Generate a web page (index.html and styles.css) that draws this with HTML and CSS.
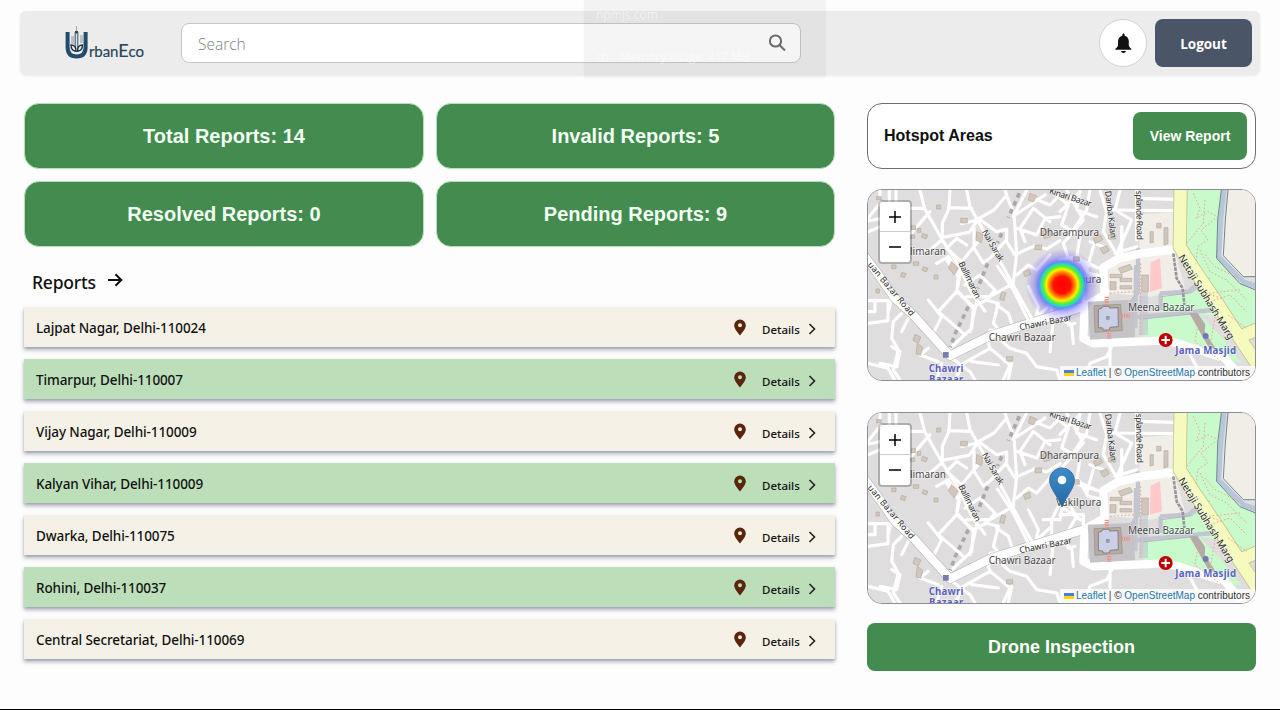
FILE: index.html
```html
<!DOCTYPE html>
<html lang="en">
<head>
<meta charset="utf-8">
<title>UrbanEco</title>
<link rel="stylesheet" href="styles.css">
</head>
<body>
<svg class="defs" aria-hidden="true">
  <defs>
    <radialGradient id="heat">
      <stop offset="0" stop-color="#ff0000"/><stop offset=".24" stop-color="#ff1200"/>
      <stop offset=".35" stop-color="#ff8a00"/><stop offset=".43" stop-color="#fff000"/>
      <stop offset=".51" stop-color="#58f035"/><stop offset=".58" stop-color="#20dcc0"/>
      <stop offset=".64" stop-color="#4b6cff" stop-opacity=".75"/><stop offset=".76" stop-color="#5a4cf5" stop-opacity=".36"/>
      <stop offset="1" stop-color="#5a4cf5" stop-opacity="0"/>
    </radialGradient>
    <linearGradient id="pinfill" x2="0" y2="1"><stop offset="0" stop-color="#3d8bc9"/><stop offset="1" stop-color="#246aa6"/></linearGradient>
    <symbol id="city" viewBox="24 15 1161 570">
      <path fill="#dfdddd" d="M24 15h1161v570H24z"/>
      <!-- open land and gardens -->
      <path fill="#f1eee8" d="M838 88l106-6v102l-106 12zM745 245l90-40 110-5 30 110-100 25-130-10zM1105 15h80v262l-38-2-62-60 10-130z"/>
      <path fill="#c8facc" d="M985 15h108l-12 90-5 110 40 60 69 45v125l-50 10-75-115-82-140zM905 335l90-12 55-45 70 100 70 120-15 20-60-120-140-15-75 5zM850 402l165-17 70 70 60 80-60-15-80-45-155-15z"/>
      <path fill="#ffc9c9" d="M872 232l28-12 6 90-36 10z"/>
      <path fill="#b7bdca" d="M838 320h26v130h-26z" opacity=".5"/>
      <!-- water and fort wall -->
      <path class="wall" d="M1092 15l-10 90-6 110 75 76 38 12"/>
      <path class="wall-line" d="M1104 15l-8 90-6 107 60 63h36M1084 15l-11 90-3 115 70 76 50 20"/>
      <path class="lane" d="M834 190v130l-20 35M900 325l85-5 55-45M902 325v50M820 397l240-22M828 240l-2 190"/>
      <path class="edge" d="M905 335l90-12 55-45M850 402l165-17"/>
      <!-- minor streets -->
      <g class="street">
        <path d="M180 15l15 58 52 92 45 70 45 93 38 50M24 108l40-8 50-30 80 0M24 140l50-20M88 15v40l22 5M108 15v55M60 15v40l-36 45M245 165l-35 30-35 5M210 80l-70 80"/>
        <path d="M320 15l10 50 45 80-70 85-45-40 30-30 30 20M270 15l-3 55-20 45 0 42 80-15 30-42 45-25 38-45M265 68l70 2M440 30l-5-15M355 100l55 40 30-8 0 32-50 55-20 15-28-45 0-60M305 115l50-10M440 32l22 55 8 120-10 85M465 90l90-60M500 15l-40 80M520 40l50 20 30-30M470 130l60 20 25-50 45-5M495 170l-15-40 40-60 50 40M470 207l55-25 35 10 40-25M470 270l35-30 25 15 40-45M460 295l-70 40-70 0M440 170l25 40"/>
        <path d="M230 235l35-20 35 55-10 50 50 45 40-20 25-30-45-45-45 30M260 225l35 50-5 45-55 60 75 65M205 345l40 50-30 60M295 320l45 50-5 60-70 65M375 345l40 10-15 60 25 30M410 360l35 25 15 45M350 350l-20 90M390 435l55 0M125 385l-25 25-5 50 20 35-15 60 20 30M24 415l60-8 0-60-60 0M45 345l0 35-21 0M24 535l60 15 20 35M85 380l15-60M145 400l-20 40M95 485l25 15-10 45-50-10"/>
        <path d="M270 515l60 45 15 25M380 455l10 35-80 45-25 50M390 490l60 50-20 45M410 455l40 35 50 15 30 40 60 10 10 30M455 535l-10 50M580 400l-10 100M525 410l10-45-30-60M575 395l0-60 25-50M550 335l50 0 10-50M205 490l-25 20 55 20M335 530l80 10M245 535l-15 50M520 405l55-50"/>
        <path d="M590 30l35 30-20 60 55 30M600 80l60-60M620 15l50 90-60 70 15 45 110 35M660 15l-10 60 60 20M690 15l-10 60-40 60M720 15l20 65-10 60 50 85M780 15l-15 60 50 30-40 90M830 15l0 150M750 75l195 2M600 225l55-10 30 50 45 10M610 265l40 60-35 60M660 150l-10 70 70 30M600 320l70 0 0 65M690 170l40 15M840 40l105 3M785 215l0-90M625 420l20-5M600 400l35 20 5 55M610 300l60 40M765 205l65-20M750 480l0 60M755 485l-15 30-50 20-15 50M985 500l25 45M700 185l-20 70"/>
      </g>
      <path class="casing" d="M0 195l45 60 60 85 55 50 110 122 125-62 90-28 120-37 65-20"/>
      <path class="avenue" d="M0 195l45 60 60 85 55 50 110 122 125-62 90-28 120-37 65-20"/>
      <path class="nai" d="M418 225l47 85 55 98M410 240l50 75 48 97"/>
      <path class="avenue" d="M955 192l-110 13-70 16-45 27 4 82-60 34-4 96 30 15 205-8 45 7 145 46 50 60"/>
      <path class="casing2" d="M962 0l-3 185 41 65 70 102 70 108 90 135M1140 455l60-25"/>
      <path class="highway" d="M962 0l-3 185 41 65 70 102 70 108 90 135M1140 455l60-25"/>
      <!-- mosque -->
      <path fill="#c6c3c6" d="M683 350l138-6 4 112-135 8z"/>
      <path fill="#b5aba0" stroke="#968d84" stroke-width="2" d="M702 362l80-4 5 78-82 6z"/>
      <path fill="#cbd0e6" stroke="#867e87" stroke-width="3" d="M715 373l10-3 4-6 18 0 2 5 25-1 1 57-25 2-2 8-18 0-2-6-13-1z"/>
      <path fill="#9398b7" d="M738 393h11v11h-11z"/>
      <path fill="#b4aba6" d="M988 385l24-2 24 35-2 22 36 55-25-10z"/>
      <path class="rail" d="M478 25L445 98M425 145l-12 28M383 235l-30 75M325 365l-40 82-14 40"/>
      <path class="rail2" d="M940 205l10 75 18 30 5 50"/>
      <!-- buildings -->
      <g class="blocks">
        <path d="M155 122h12v12h-12zM188 145l15 5-5 12-14-5zM150 150h14v10h-14zM172 130h10v12h-10zM160 230h16v11h-16zM190 245l14 5-5 11-13-5zM222 270h12v12h-12zM125 262l13 4-4 12-13-4zM95 240h13v11h-13zM230 60h12v12h-12zM302 100h20v14h-20zM350 140l20 8-6 25-16-7zM425 320l12 3-5 24-13-4zM165 448l18 8-8 18-16-8zM172 475l16 12-6 24-14-5zM440 515h18v13h-18zM275 230l20 20-12 20-18-22zM490 260l18-7 5 15-18 7zM510 25l20 8-10 18-15-6zM545 140l25-10 5 25-22 6zM525 180h20v14h-20zM48 312h10v12h-10zM50 35h14v10h-14z"/>
        <path d="M750 268h36v10h-36zM775 250l35-12 8 14-35 13zM750 290h18v24h-18zM780 280h35v10h-35zM780 302h35v10h-35zM870 140l10 0 0 32-10 2zM912 128l12 0 0 48-12 4zM890 115h13v14h-13zM845 270l20 0 0 50-20 0zM720 190l20-8 8 15-18 10zM700 160l22-10 6 14-22 12zM640 215l18 0 0 14-18 0zM745 150h22v12h-22z"/>
      </g>
      <path class="footway" d="M1000 25l20 45-12 30 35-20 30 15-50 40 20 30-30 20-5 50M1035 45l-5 70-50 60M1020 195l30 65 50 25 60 60M1035 210l30 35 80 40M1050 350l60-20 50 50M1105 390l55 40M1015 410l-10 60 80 60M1065 395l-15 90M750 325l75-5M842 235v215M1085 340l-45-15 100-10"/>
      <path class="steps" d="M740 335v24M747 437v24M785 392h24"/>
      <path fill="#777cb3" d="M249 501h17v17h-17z"/>
      <circle cx="1037" cy="453" r="9" fill="#7278b8"/>
      <circle cx="917" cy="465" r="21" fill="#bf0000"/><path stroke="#fff" stroke-width="6" d="M904 465h26M917 452v26"/>
    </symbol>
  </defs>
</svg>

<header class="topbar">
  <div class="brand">
    <svg width="25" height="37" viewBox="0 0 25 37">
      <path d="M11.500 1v7" stroke="#9aa7b0" stroke-width="1"/>
      <path fill="#6f8290" d="M9.500 7h4v20h-4z"/><path fill="#d7dee2" d="M11 9h1v17h-1z"/>
      <path fill="#33495d" d="M10 6h3v2h-3z"/>
      <path stroke="#8596a2" stroke-width="1.200" d="M6 12h3M6 14h3M6 16h3M6 18h3M15 11h3M15 13h3M15 15h3M15 17h3"/>
      <path fill="none" stroke="#1f4d6b" stroke-width="4" d="M2.600 7v15c0 7 4 9.500 9 9.500s9-2.500 9-9.500V7"/>
      <path fill="#e4eaed" stroke="#20303e" stroke-width="1.300" d="M11 26c-4 0-5-3-5-6 3 0 5 2 5 6zM12.500 26c4 0 5-3 5-6-3 0-5 2-5 6z"/>
    </svg>
    <span class="brand-name">rban<b>E</b>co</span>
  </div>
  <div class="search">
    <span>Search</span>
    <svg width="18" height="18" viewBox="0 0 18 18" fill="none" stroke="#6b6b6b" stroke-width="2"><circle cx="7.500" cy="7" r="5.600"/><path d="M11.700 11.200L17 16.500"/></svg>
  </div>
  <div class="actions">
    <div class="bell"><svg width="18" height="21" viewBox="0 0 18 21" fill="#111"><path d="M9.500 .5c.7 0 1.200.6 1.200 1.500v.7c2.600.7 4.100 2.900 4.100 5.600v4.500c.4 1.700 2.500 2.500 2.500 3.200v.8H1.400V16c0-.7 2.200-1.500 2.600-3.200V8.300c0-2.700 1.700-4.900 4.300-5.600V2C8.300 1.100 8.800.5 9.500 .5zM7 18h5c-.3 1.300-1.200 2-2.500 2s-2.200-.7-2.500-2z"/></svg></div>
    <div class="logout">Logout</div>
  </div>
</header>

<div class="ghost">
  <span>npmjs.com</span>
  <span class="ghost-row"><svg width="13" height="10" viewBox="0 0 13 10" fill="none" stroke="currentColor" stroke-width="1.300"><path d="M2 9a5 5 0 1 1 9 0zM6 6l3-3"/></svg>Memory usage: 417 MB</span>
</div>

<main class="page">
  <section class="left">
    <div class="stats">
      <div class="stat">Total Reports: 14</div><div class="stat">Invalid Reports: 5</div>
      <div class="stat">Resolved Reports: 0</div><div class="stat">Pending Reports: 9</div>
    </div>
    <h2 class="title">Reports <svg width="16" height="14" viewBox="0 0 16 14" fill="none" stroke="#111" stroke-width="2"><path d="M1 7h13M8.500 1.200L14.300 7l-5.800 5.800"/></svg></h2>
    <div class="list">
      <div class="row"><span>Lajpat Nagar, Delhi-110024</span><svg class="pin" viewBox="0 0 12 17"><path d="M6 .5a5.800 5.800 0 0 1 5.800 5.800C11.800 10 8 14 6 16.500 4 14 .2 10 .2 6.300A5.800 5.800 0 0 1 6 .5zm0 3.700a2 2 0 1 0 0 4 2 2 0 0 0 0-4z"/></svg><span class="details">Details</span><svg class="chev" viewBox="0 0 8 12"><path d="M1.500 1l5 5-5 5"/></svg></div>
      <div class="row"><span>Timarpur, Delhi-110007</span><svg class="pin" viewBox="0 0 12 17"><path d="M6 .5a5.800 5.800 0 0 1 5.800 5.800C11.800 10 8 14 6 16.500 4 14 .2 10 .2 6.300A5.800 5.800 0 0 1 6 .5zm0 3.700a2 2 0 1 0 0 4 2 2 0 0 0 0-4z"/></svg><span class="details">Details</span><svg class="chev" viewBox="0 0 8 12"><path d="M1.500 1l5 5-5 5"/></svg></div>
      <div class="row"><span>Vijay Nagar, Delhi-110009</span><svg class="pin" viewBox="0 0 12 17"><path d="M6 .5a5.800 5.800 0 0 1 5.800 5.800C11.800 10 8 14 6 16.500 4 14 .2 10 .2 6.300A5.800 5.800 0 0 1 6 .5zm0 3.700a2 2 0 1 0 0 4 2 2 0 0 0 0-4z"/></svg><span class="details">Details</span><svg class="chev" viewBox="0 0 8 12"><path d="M1.500 1l5 5-5 5"/></svg></div>
      <div class="row"><span>Kalyan Vihar, Delhi-110009</span><svg class="pin" viewBox="0 0 12 17"><path d="M6 .5a5.800 5.800 0 0 1 5.800 5.800C11.800 10 8 14 6 16.500 4 14 .2 10 .2 6.300A5.800 5.800 0 0 1 6 .5zm0 3.700a2 2 0 1 0 0 4 2 2 0 0 0 0-4z"/></svg><span class="details">Details</span><svg class="chev" viewBox="0 0 8 12"><path d="M1.500 1l5 5-5 5"/></svg></div>
      <div class="row"><span>Dwarka, Delhi-110075</span><svg class="pin" viewBox="0 0 12 17"><path d="M6 .5a5.800 5.800 0 0 1 5.800 5.800C11.800 10 8 14 6 16.500 4 14 .2 10 .2 6.300A5.800 5.800 0 0 1 6 .5zm0 3.700a2 2 0 1 0 0 4 2 2 0 0 0 0-4z"/></svg><span class="details">Details</span><svg class="chev" viewBox="0 0 8 12"><path d="M1.500 1l5 5-5 5"/></svg></div>
      <div class="row"><span>Rohini, Delhi-110037</span><svg class="pin" viewBox="0 0 12 17"><path d="M6 .5a5.800 5.800 0 0 1 5.800 5.800C11.800 10 8 14 6 16.500 4 14 .2 10 .2 6.300A5.800 5.800 0 0 1 6 .5zm0 3.700a2 2 0 1 0 0 4 2 2 0 0 0 0-4z"/></svg><span class="details">Details</span><svg class="chev" viewBox="0 0 8 12"><path d="M1.500 1l5 5-5 5"/></svg></div>
      <div class="row"><span>Central Secretariat, Delhi-110069</span><svg class="pin" viewBox="0 0 12 17"><path d="M6 .5a5.800 5.800 0 0 1 5.800 5.800C11.800 10 8 14 6 16.500 4 14 .2 10 .2 6.300A5.800 5.800 0 0 1 6 .5zm0 3.700a2 2 0 1 0 0 4 2 2 0 0 0 0-4z"/></svg><span class="details">Details</span><svg class="chev" viewBox="0 0 8 12"><path d="M1.500 1l5 5-5 5"/></svg></div>
    </div>
  </section>

  <aside class="right">
    <div class="hotspot"><span>Hotspot Areas</span><div class="view">View Report</div></div>

    <div class="map">
      <svg class="tiles" viewBox="24 15 1161 570">
        <use href="#city" x="24" y="15" width="1161" height="570"/>
        <g class="labels">
          <text x="150" y="210" textLength="108">limaran</text><text x="539" y="152" textLength="178">Dharampura</text>
          <text x="386" y="469" textLength="201">Chawri Bazaar</text><text x="804" y="377" textLength="199">Meena Bazaar</text>
          <text x="588" y="293" textLength="136">Vakilpura</text>
          <g class="station"><text x="206" y="560" textLength="104">Chawri</text><text x="207" y="593" textLength="103">Bazaar</text><text x="946" y="506" textLength="182">Jama Masjid</text></g>
          <g class="road">
            <text transform="translate(22 240) rotate(50)" textLength="202">uan Bazar Road</text>
            <text transform="translate(295 235) rotate(64)" textLength="120">Ballimaran</text>
            <text transform="translate(365 140) rotate(60)" textLength="106">Nai Sarak</text>
            <text transform="translate(480 436) rotate(-11)" textLength="160">Chawri Bazar</text>
            <text transform="translate(566 25) rotate(18)" textLength="132">Kinari Bazar</text>
            <text transform="translate(735 19) rotate(83)" textLength="142">Dariba Kalan</text>
            <text transform="translate(828 17) rotate(89)" textLength="148">splande Road</text>
            <text class="big" transform="translate(954 217) rotate(58.500)" textLength="292">Netaji Subhash Marg</text>
          </g>
        </g>
        <circle cx="606" cy="300" r="110" fill="url(#heat)"/>
      </svg>
      <div class="zoom"><svg width="30" height="60" viewBox="0 0 30 60"><path stroke="#ccc" d="M0 29.500h30"/><path stroke="#000" stroke-width="1.500" d="M9 15h12M15 9v12M9 45h12"/></svg></div>
      <div class="credit"><i class="flag"></i><a>Leaflet</a> | © <a>OpenStreetMap</a> contributors</div>
    </div>

    <div class="map second">
      <svg class="tiles" viewBox="24 15 1161 570">
        <use href="#city" x="24" y="15" width="1161" height="570"/>
        <g class="labels">
          <text x="150" y="210" textLength="108">limaran</text><text x="539" y="152" textLength="178">Dharampura</text>
          <text x="386" y="469" textLength="201">Chawri Bazaar</text><text x="804" y="377" textLength="199">Meena Bazaar</text>
          <text x="588" y="293" textLength="136">Vakilpura</text>
          <g class="station"><text x="206" y="560" textLength="104">Chawri</text><text x="207" y="593" textLength="103">Bazaar</text><text x="946" y="506" textLength="182">Jama Masjid</text></g>
          <g class="road">
            <text transform="translate(22 240) rotate(50)" textLength="202">uan Bazar Road</text>
            <text transform="translate(295 235) rotate(64)" textLength="120">Ballimaran</text>
            <text transform="translate(365 140) rotate(60)" textLength="106">Nai Sarak</text>
            <text transform="translate(480 436) rotate(-11)" textLength="160">Chawri Bazar</text>
            <text transform="translate(566 25) rotate(18)" textLength="132">Kinari Bazar</text>
            <text transform="translate(735 19) rotate(83)" textLength="142">Dariba Kalan</text>
            <text transform="translate(828 17) rotate(89)" textLength="148">splande Road</text>
            <text class="big" transform="translate(954 217) rotate(58.500)" textLength="292">Netaji Subhash Marg</text>
          </g>
        </g>
        <path fill="url(#pinfill)" stroke="#2e6f9f" stroke-width="3" d="M606 180c-21 0-37 17-37 37 0 25 24 46 37 80 13-34 37-55 37-80 0-20-16-37-37-37z"/>
        <circle cx="606" cy="216" r="13" fill="#fff"/>
      </svg>
      <div class="zoom"><svg width="30" height="60" viewBox="0 0 30 60"><path stroke="#ccc" d="M0 29.500h30"/><path stroke="#000" stroke-width="1.500" d="M9 15h12M15 9v12M9 45h12"/></svg></div>
      <div class="credit"><i class="flag"></i><a>Leaflet</a> | © <a>OpenStreetMap</a> contributors</div>
    </div>

    <div class="drone">Drone Inspection</div>
  </aside>
</main>
</body>
</html>
```

FILE: styles.css
```css
* { box-sizing: border-box; }
body { margin: 0; height: 710px; overflow: hidden; background: #fdfdfd; border-bottom: 1px solid #000; padding: 11px 20px 0; font-family: "Noto Sans", "Open Sans", sans-serif; color: #111; position: relative; }
.defs { position: absolute; width: 0; height: 0; }
.topbar { height: 64px; background: #ececec; border-radius: 6px; display: flex; align-items: center; padding: 0 8px 0 45px; box-shadow: 0 1px 3px rgba(0,0,0,.08); }
.brand { width: 116px; height: 37px; display: flex; align-items: flex-start; color: #28465c; }
.brand-name { font: 15px/20px Lato, sans-serif; letter-spacing: -.1px; padding-top: 15px; margin-left: -1px; white-space: nowrap; -webkit-text-stroke: .2px #28465c; }
.brand-name b { font-weight: 400; font-size: 18px; }
.search { width: 620px; height: 40px; background: #fff; border: 1px solid #c6c6c6; border-radius: 8px; display: flex; align-items: center; justify-content: space-between; padding: 2px 14px 0 16px; font: 300 15.500px/24px "Open Sans", sans-serif; color: #7c7f84; }
.search svg { margin-top: -2px; }
.actions { margin-left: auto; display: flex; gap: 8px; align-items: center; }
.bell { width: 48px; height: 48px; border-radius: 50%; background: #fff; border: 1px solid #d3d3d8; display: flex; align-items: center; justify-content: center; }
.logout { width: 97px; height: 48px; border-radius: 8px; background: #4a5568; color: #fff; font: 700 13.500px/50px "Open Sans", sans-serif; text-align: center; }
.ghost { position: absolute; left: 584px; top: 0; width: 242px; height: 77px; background: rgba(120,120,135,.075); color: rgba(255,255,255,.5); font: 12px/16px "Open Sans", sans-serif; padding: 7px 12px; display: flex; flex-direction: column; gap: 26px; box-shadow: 0 1px 2px rgba(0,0,0,.03); }
.ghost-row { display: flex; align-items: center; gap: 11px; white-space: nowrap; letter-spacing: -.1px; }
.page { display: flex; justify-content: space-between; padding: 28px 4px 0; }
.left { width: 811px; }
.stats { display: grid; grid-template-columns: 400px 399px; gap: 12px; }
.stat { height: 66px; border: 1px solid #b7e0ba; border-radius: 15px; background: #438b4e; color: #f2fff3; font: 700 20px/65px "Liberation Sans", Arial, sans-serif; text-align: center; }
.title { margin: 0; height: 60px; padding: 9px 0 0 8px; display: flex; align-items: center; gap: 11px; font: 500 17.500px/24px "Noto Sans", sans-serif; letter-spacing: -.2px; }
.title svg { margin-top: -3px; }
.list { display: flex; flex-direction: column; gap: 12px; }
.row { height: 40px; background: #f6f1e7; padding: 0 19px 0 12px; display: flex; align-items: center; font-size: 13.500px; font-weight: 500; letter-spacing: -.1px; box-shadow: 0 3px 4px rgba(70,75,105,.42), 0 1px 2px rgba(70,75,105,.2); }
.row:nth-child(even) { background: #bcdfba; }
.row > span:first-child { flex: 1; padding-top: 1px; }
.pin { width: 12px; height: 17px; fill: #5a260b; }
.details { width: 38px; margin: 4px 8px 0 16px; font-size: 11.500px; letter-spacing: 0; white-space: nowrap; }
.chev { width: 8px; height: 12px; margin-top: 4px; fill: none; stroke: #222; stroke-width: 1.600; }
.right { width: 389px; }
.hotspot { height: 66px; border: 1px solid #6e6a78; border-radius: 15px; display: flex; align-items: center; justify-content: space-between; padding: 0 8px 0 16px; font: 700 16px/24px "Liberation Sans", Arial, sans-serif; background: #fff; }
.view { width: 114px; height: 48px; border-radius: 8px; background: #438b4e; color: #fff; text-align: center; font: 700 14px/48px "Liberation Sans", Arial, sans-serif; }
.map { position: relative; height: 192px; margin-top: 20px; border: 1px solid #8d8d96; border-radius: 15px; overflow: hidden; }
.map.second { margin-top: 31px; }
.tiles { display: block; width: 387px; height: 190px; }
.zoom { position: absolute; left: 10px; top: 10px; width: 34px; height: 64px; border: 2px solid rgba(0,0,0,.22); border-radius: 4px; background: #fff; background-clip: padding-box; }
.zoom svg { display: block; }
.credit { position: absolute; right: 0; bottom: 0; height: 14px; width: 195px; padding: 0 5px 0 4px; background: rgba(255,255,255,.8); font: 10px/14px "Liberation Sans", Arial, sans-serif; color: #333; white-space: nowrap; }
.credit a { color: #1b78a8; }
.flag { display: inline-block; width: 10px; height: 6px; margin-right: 2px; vertical-align: 0; background: linear-gradient(#4c7be1 50%, #ffd500 50%); }
.drone { margin-top: 19px; height: 48px; border-radius: 8px; background: #438b4e; color: #fff; font: 700 18px/48px "Liberation Sans", Arial, sans-serif; text-align: center; }
.street, .avenue, .nai, .casing, .casing2, .highway, .wall, .wall-line, .lane, .edge, .rail, .rail2, .footway, .steps { fill: none; stroke-linejoin: round; }
.street { stroke: #fff; stroke-width: 9.500; stroke-linecap: round; }
.avenue { stroke: #fff; stroke-width: 25; }
.casing { stroke: #bcbaba; stroke-width: 29; }
.nai { stroke: #fff; stroke-width: 9; }
.casing2 { stroke: #c4c58a; stroke-width: 42; }
.highway { stroke: #f7fabf; stroke-width: 37; }
.wall { stroke: #b5c8da; stroke-width: 15; }
.wall-line { stroke: #77818f; stroke-width: 3; }
.lane { stroke: #c3c6d1; stroke-width: 13; }
.edge { stroke: #a4aab5; stroke-width: 2; }
.rail { stroke: #aaa8ab; stroke-width: 11; stroke-dasharray: 14 12; }
.rail2 { stroke: #96949e; stroke-width: 8; stroke-dasharray: 11 3; }
.blocks { fill: #d1c7bd; stroke: #b6aa9d; stroke-width: 2; }
.footway { stroke: #eda394; stroke-width: 3; stroke-dasharray: 5 6; }
.steps { stroke: #ef8f87; stroke-width: 12; stroke-dasharray: 4 3; }
.labels { font-family: "Noto Sans", sans-serif; font-size: 30px; fill: #4a4a4a; stroke: #fff; stroke-opacity: .55; stroke-width: 4; paint-order: stroke; }
.road { font-size: 26px; fill: #2c2c2c; }
.big { font-size: 30px; }
.station { font-size: 29px; font-weight: 700; fill: #5b62bd; }
```
